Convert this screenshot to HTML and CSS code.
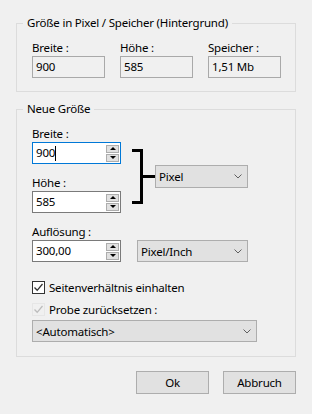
FILE: index.html
```html
<!DOCTYPE html>
<html lang="de">
<head>
  <meta charset="UTF-8" />
  <title>Bildgröße</title>
  <link rel="stylesheet" href="styles.css">
</head>
<body>
  <div class="dialog">
    <fieldset class="group info">
      <legend>Größe in Pixel / Speicher (Hintergrund)</legend>
      <div class="info-row">
        <div class="field">
          <label>Breite :</label>
          <div class="readonly">900</div>
        </div>
        <div class="field">
          <label>Höhe :</label>
          <div class="readonly">585</div>
        </div>
        <div class="field">
          <label>Speicher :</label>
          <div class="readonly">1,51 Mb</div>
        </div>
      </div>
    </fieldset>

    <fieldset class="group resize">
      <legend>Neue Größe</legend>
      <div class="size-row">
        <div class="size-fields">
          <label>Breite :</label>
          <div class="spin focused">
            <span class="value">900<i class="caret"></i></span>
            <div class="spin-btns"><span class="up"></span><span class="down"></span></div>
          </div>
          <label class="next">Höhe :</label>
          <div class="spin">
            <span class="value">585</span>
            <div class="spin-btns"><span class="up"></span><span class="down"></span></div>
          </div>
        </div>
        <div class="link">
          <div class="bracket"></div>
          <div class="tick"></div>
          <div class="combo unit">
            <span>Pixel</span>
            <svg width="8" height="5" viewBox="0 0 8 5"><polyline points="0.5,0.5 4,4 7.5,0.5" fill="none" stroke="#606060" stroke-width="1"/></svg>
          </div>
        </div>
      </div>

      <label class="next">Auflösung :</label>
      <div class="res-row">
        <div class="spin">
          <span class="value">300,00</span>
          <div class="spin-btns"><span class="up"></span><span class="down"></span></div>
        </div>
        <div class="combo res-unit">
          <span>Pixel/Inch</span>
          <svg width="8" height="5" viewBox="0 0 8 5"><polyline points="0.5,0.5 4,4 7.5,0.5" fill="none" stroke="#606060" stroke-width="1"/></svg>
        </div>
      </div>

      <div class="check first">
        <span class="box">
          <svg width="11" height="11" viewBox="0 0 11 11"><polyline points="1.5,5.5 4.2,8.3 9.5,2" fill="none" stroke="#333" stroke-width="1.3"/></svg>
        </span>
        <span>Seitenverhältnis einhalten</span>
      </div>
      <div class="check disabled">
        <span class="box">
          <svg width="11" height="11" viewBox="0 0 11 11"><polyline points="1.5,5.5 4.2,8.3 9.5,2" fill="none" stroke="#bcbcbc" stroke-width="1.3"/></svg>
        </span>
        <span>Probe zurücksetzen :</span>
      </div>
      <div class="combo sample">
        <span>&lt;Automatisch&gt;</span>
        <svg width="8" height="5" viewBox="0 0 8 5"><polyline points="0.5,0.5 4,4 7.5,0.5" fill="none" stroke="#606060" stroke-width="1"/></svg>
      </div>
    </fieldset>

    <div class="buttons">
      <button>Ok</button>
      <button>Abbruch</button>
    </div>
  </div>
</body>
</html>
```

FILE: styles.css
```css
body {
  margin: 0;
  background: #f0f0f0;
  font-family: "Noto Sans", "Open Sans", sans-serif;
  font-size: 11.5px;
  letter-spacing: -0.2px;
  color: #000;
}

.dialog {
  padding: 15px 16px 0 16px;
  width: 280px;
}

/* Group boxes */
.group {
  box-sizing: border-box;
  width: 280px;
  margin: 0;
  padding: 9px 15px 13px 15px;
  border: 1px solid #dcdcdc;
  min-width: 0;
}
.group legend {
  margin-left: -9px;
  padding: 0 4px;
  line-height: 16px;
}
.resize {
  margin-top: 9px;
  padding-bottom: 14px;
}

label {
  display: block;
  height: 16px;
  line-height: 16px;
}
label.next {
  margin-top: 11px;
}

/* Read-only values */
.info-row {
  display: grid;
  grid-template-columns: 73px 73px 73px;
  column-gap: 15px;
}
.readonly {
  box-sizing: border-box;
  height: 22px;
  border: 1px solid #a9a9a9;
  padding: 0 3px;
  line-height: 20px;
}

/* Spin boxes */
.spin {
  box-sizing: border-box;
  width: 89px;
  height: 22px;
  border: 1px solid #7a7a7a;
  background: #fff;
  display: flex;
  align-items: center;
  justify-content: space-between;
  padding: 0 1px 0 3px;
}
.spin.focused {
  border-color: #0078d7;
}
.spin .value {
  display: flex;
  align-items: center;
  line-height: 20px;
}
.caret {
  display: inline-block;
  width: 1px;
  height: 15px;
  background: #000;
}
.spin-btns {
  display: flex;
  flex-direction: column;
  gap: 1px;
}
.spin-btns span {
  box-sizing: border-box;
  width: 13px;
  height: 8px;
  border: 1px solid #adadad;
  background: #e1e1e1;
  display: flex;
  align-items: center;
  justify-content: center;
}
.spin-btns .up::after {
  content: "";
  border-left: 3px solid transparent;
  border-right: 3px solid transparent;
  border-bottom: 3px solid #000;
}
.spin-btns .down::after {
  content: "";
  border-left: 3px solid transparent;
  border-right: 3px solid transparent;
  border-top: 3px solid #000;
}

/* Width / height link */
.size-row {
  display: flex;
}
.link {
  display: flex;
  align-items: center;
  height: 55px;
  margin: 23px 0 0 11px;
}
.bracket {
  box-sizing: border-box;
  width: 11px;
  height: 55px;
  border: 3px solid #000;
  border-left: none;
}
.tick {
  width: 12px;
  height: 3px;
  background: #000;
}

/* Combo boxes */
.combo {
  box-sizing: border-box;
  height: 23px;
  border: 1px solid #adadad;
  background: #e1e1e1;
  display: flex;
  align-items: center;
  justify-content: space-between;
  padding: 0 5px 0 3px;
}
.combo svg {
  display: block;
}
.unit {
  width: 93px;
}

.res-row {
  display: flex;
  gap: 16px;
}
.res-unit {
  width: 111px;
  height: 22px;
}

/* Checkboxes */
.check {
  display: flex;
  align-items: center;
  height: 16px;
  gap: 4px;
}
.check.first {
  margin-top: 17px;
}
.check.disabled {
  margin-top: 6px;
}
.check .box {
  box-sizing: border-box;
  width: 13px;
  height: 13px;
  border: 1px solid #333;
  background: #fff;
  display: flex;
  align-items: center;
  justify-content: center;
}
.check.disabled .box {
  border-color: #e6e6e6;
  background: #f0f0f0;
}

.sample {
  width: 225px;
  height: 22px;
  margin-top: 3px;
}

/* Dialog buttons */
.buttons {
  display: flex;
  justify-content: flex-end;
  gap: 14px;
  margin-top: 14px;
}
.buttons button {
  box-sizing: border-box;
  width: 73px;
  height: 23px;
  border: 1px solid #adadad;
  background: #e1e1e1;
  font-family: inherit;
  font-size: 11.5px;
  letter-spacing: -0.2px;
  color: #000;
  padding: 0;
}
```
